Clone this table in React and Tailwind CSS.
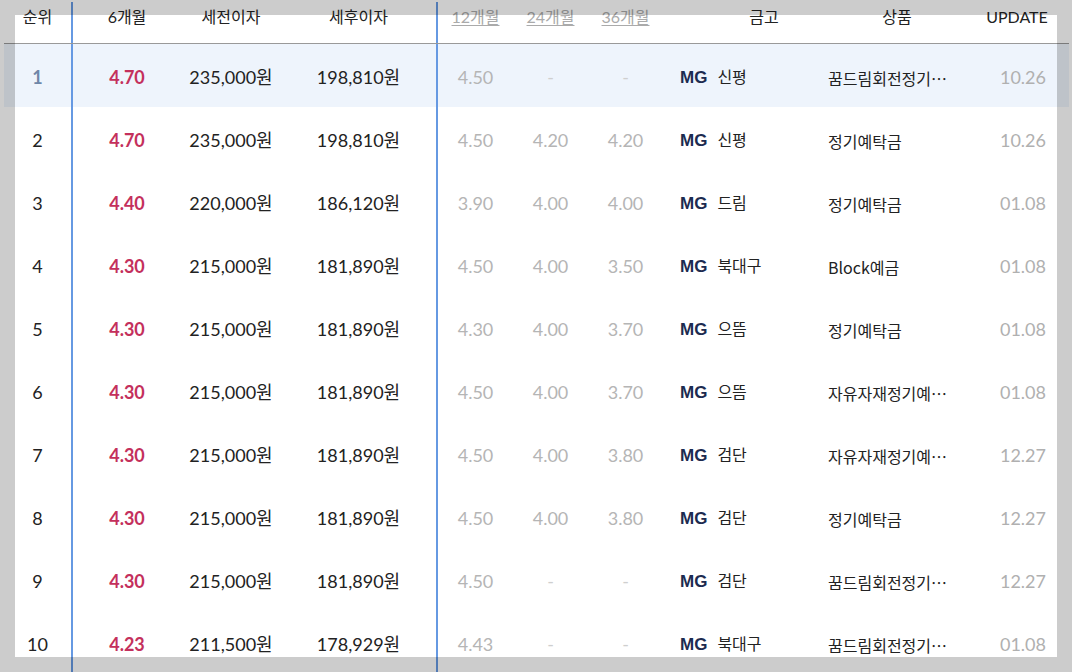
import React from "react";

const rows = [
  ["1", "4.70", "235,000", "198,810", "4.50", "-", "-", "신평", "꿈드림회전정기예탁금", "10.26"],
  ["2", "4.70", "235,000", "198,810", "4.50", "4.20", "4.20", "신평", "정기예탁금", "10.26"],
  ["3", "4.40", "220,000", "186,120", "3.90", "4.00", "4.00", "드림", "정기예탁금", "01.08"],
  ["4", "4.30", "215,000", "181,890", "4.50", "4.00", "3.50", "북대구", "Block예금", "01.08"],
  ["5", "4.30", "215,000", "181,890", "4.30", "4.00", "3.70", "으뜸", "정기예탁금", "01.08"],
  ["6", "4.30", "215,000", "181,890", "4.50", "4.00", "3.70", "으뜸", "자유자재정기예탁금", "01.08"],
  ["7", "4.30", "215,000", "181,890", "4.50", "4.00", "3.80", "검단", "자유자재정기예탁금", "12.27"],
  ["8", "4.30", "215,000", "181,890", "4.50", "4.00", "3.80", "검단", "정기예탁금", "12.27"],
  ["9", "4.30", "215,000", "181,890", "4.50", "-", "-", "검단", "꿈드림회전정기예탁금", "12.27"],
  ["10", "4.23", "211,500", "178,929", "4.43", "-", "-", "북대구", "꿈드림회전정기예탁금", "01.08"],
];

const num = "font-['Lato','Noto_Sans_CJK_KR',sans-serif] text-[18px]";
const kor = "font-['Noto_Sans_CJK_KR',sans-serif] text-[16px]";
const cell = "shrink-0 h-full pt-[4px] flex items-center";

const Sub = ({ v }) =>
  v === "-" ? (
    <span className="text-[#cfcfcf]">-</span>
  ) : (
    <span className="text-[#b5b5b5]">{v}</span>
  );

const Row = ({ r, first }) => (
  <div className={`flex h-[63px] ${first ? "bg-[#eef4fc]" : ""}`}>
    <div
      className={`${cell} w-[69px] justify-center border-r-2 border-[#6699e2] ${num} ${
        first ? "font-bold text-[#6f86a8]" : "text-[#222]"
      }`}
    >
      {r[0]}
    </div>
    <div className={`${cell} w-[108px] justify-center font-bold text-[#c4305c] ${num}`}>{r[1]}</div>
    <div className={`${cell} w-[100px] justify-center text-[#222] ${num}`}>{r[2]}원</div>
    <div className={`${cell} w-[157px] justify-center border-r-2 border-[#6699e2] text-[#222] ${num}`}>
      {r[3]}원
    </div>
    <div className={`${cell} w-[75px] justify-center ${num}`}>
      <Sub v={r[4]} />
    </div>
    <div className={`${cell} w-[75px] justify-center ${num}`}>
      <Sub v={r[5]} />
    </div>
    <div className={`${cell} w-[75px] justify-center ${num}`}>
      <Sub v={r[6]} />
    </div>
    <div className={`${cell} w-[166px] pl-[17px]`}>
      <div className="flex items-baseline gap-[10px]">
        <span className="font-['Liberation_Sans',sans-serif] font-bold text-[17px] text-[#1c2b50]">MG</span>
        <span className={`text-[#222] ${kor}`}>{r[7]}</span>
      </div>
    </div>
    <div className={`${cell} w-[136px]`}>
      <div className={`w-[132px] -ml-[1px] truncate text-[#222] ${kor}`}>{r[8]}</div>
    </div>
    <div className={`${cell} w-[104px] justify-end pr-[23px] text-[#b0b0b0] ${num}`}>{r[9]}</div>
  </div>
);

const head = "font-['Lato','Noto_Sans_CJK_KR',sans-serif] text-[16px] leading-[25px]";

export default function App() {
  return (
    <div className="relative w-[1072px] h-[672px] overflow-hidden bg-white">
      <div className="ml-[4px] w-[1065px] pt-[2px]">
        <div className={`flex h-[42px] border-b border-[#999] text-[#222] ${head}`}>
          <div className="w-[69px] h-full text-center pt-[2px] border-r-2 border-[#6699e2]">순위</div>
          <div className="w-[108px] text-center pt-[2px]">6개월</div>
          <div className="w-[100px] text-center pt-[2px]">세전이자</div>
          <div className="w-[157px] h-full text-center pt-[2px] border-r-2 border-[#6699e2]">세후이자</div>
          <div className="w-[75px] text-center pt-[2px] text-[#aaa] underline underline-offset-2">12개월</div>
          <div className="w-[75px] text-center pt-[2px] text-[#aaa] underline underline-offset-2">24개월</div>
          <div className="w-[75px] text-center pt-[2px] text-[#aaa] underline underline-offset-2">36개월</div>
          <div className="w-[166px] pl-[36px] text-center pt-[2px]">금고</div>
          <div className="w-[136px] text-center pt-[2px]">상품</div>
          <div className="w-[104px] text-center pt-[2px]">UPDATE</div>
        </div>
        {rows.map((r, i) => (
          <Row key={r[0]} r={r} first={i === 0} />
        ))}
      </div>
      <div className="pointer-events-none absolute inset-0 border-[15px] border-black/20" />
    </div>
  );
}
